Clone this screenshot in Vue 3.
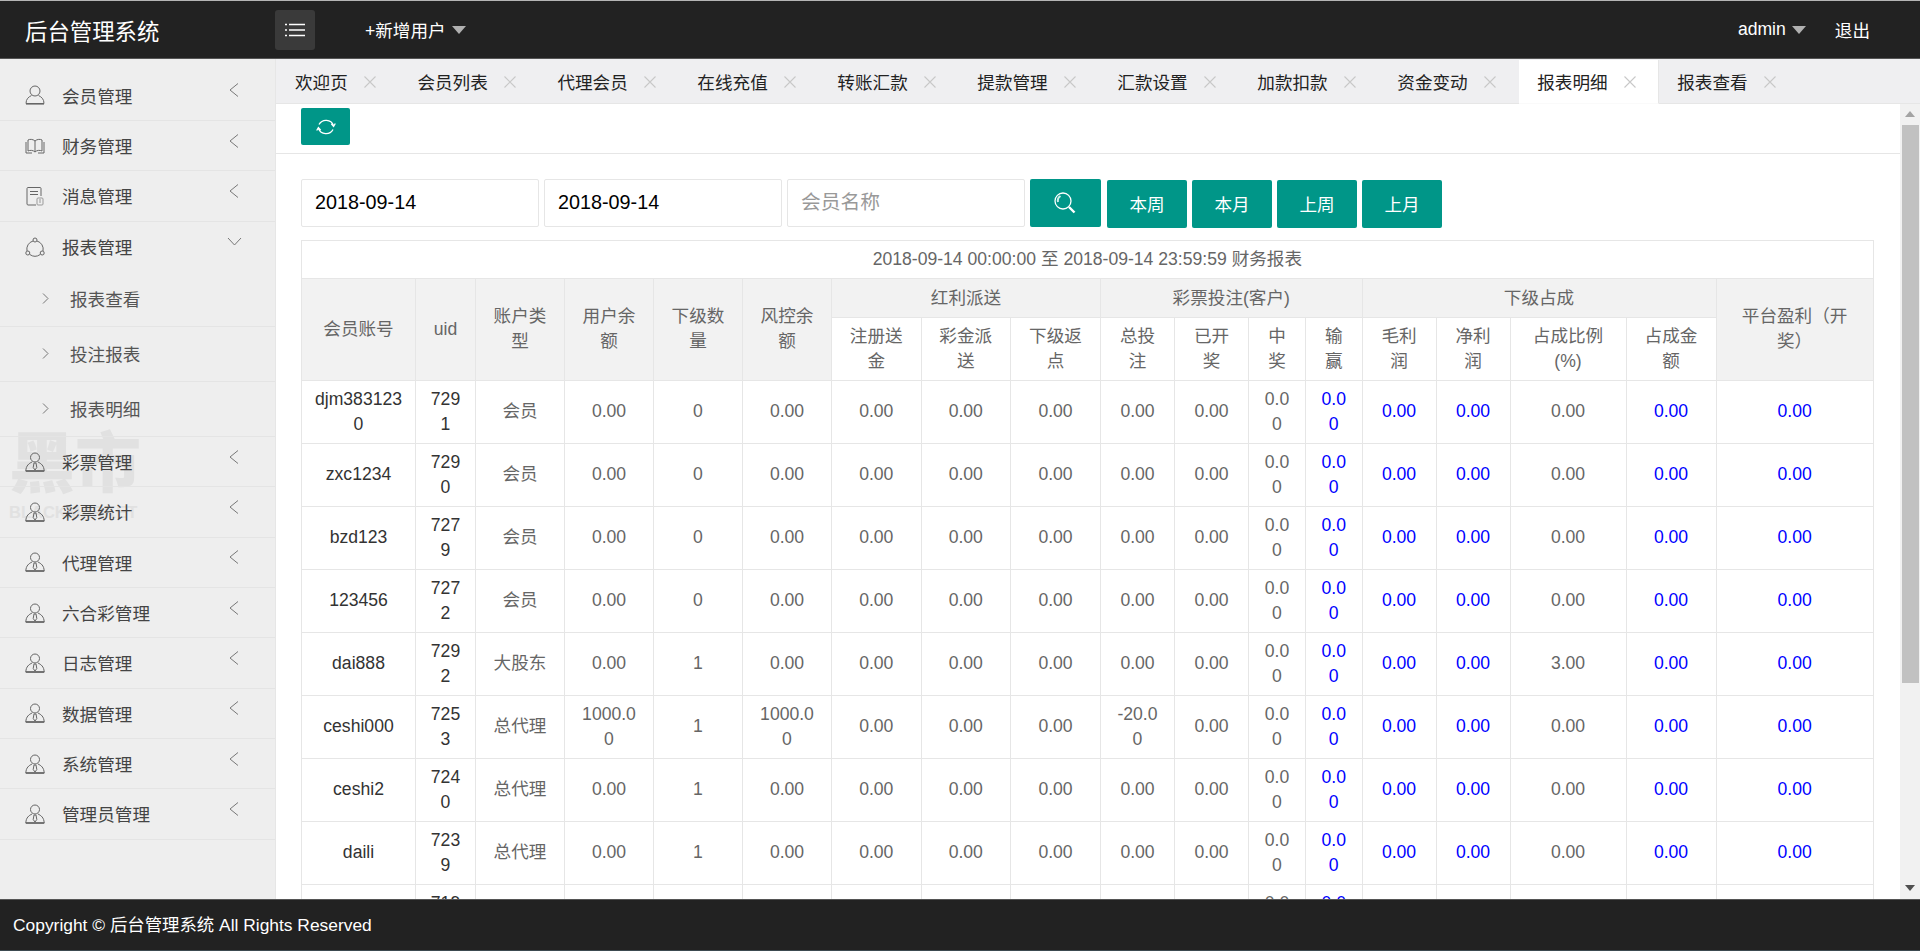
<template>
  <div class="page">
    <header class="topbar">
      <div class="logo">后台管理系统</div>
      <button class="menu-btn">
        <svg width="20" height="14" viewBox="0 0 20 14" fill="none" stroke="#fff" stroke-width="1.4">
          <path d="M0 1.5H2M4 1.5H20M0 7H2M4 7H20M0 12.5H2M4 12.5H20" />
        </svg>
      </button>
      <div class="add-user">+新增用户<span class="caret"></span></div>
      <div class="top-right">
        <span class="admin">admin<span class="caret"></span></span>
        <span class="logout">退出</span>
      </div>
    </header>

    <div class="body">
      <aside class="sidebar">
        <div class="watermark">
          <div class="wm-big">黑市</div>
          <div class="wm-small">BLACKMARKET</div>
        </div>
        <div v-for="menu in menus" :key="menu.name" class="menu-group">
          <div class="menu-item" :class="{ open: menu.children }">
            <svg class="menu-icon" width="20" height="20" viewBox="0 0 20 20" fill="none" stroke="#666" stroke-width="1">
              <template v-if="menu.icon === 'user'">
                <circle cx="10" cy="6" r="5" />
                <path d="M6.5 10.5C3.5 12 1 14 1 18.5H19C19 14 16.5 12 13.5 10.5" />
                <path d="M1 18.8H19" stroke-width="1.6" />
              </template>
              <template v-else-if="menu.icon === 'book'">
                <path d="M10 5C8 3 4.5 3 3 4V15C5 14 8 14 10 16C12 14 15 14 17 15V4C15.5 3 12 3 10 5ZM10 5V16" />
                <path d="M1 6V17H7M19 6V17H13" />
              </template>
              <template v-else-if="menu.icon === 'doc'">
                <path d="M16 10V2.5C16 1.8 15.500 1.500 15 1.500H3C2.500 1.500 2 1.800 2 2.500V18C2 18.600 2.500 19 3 19H11" />
                <path d="M5 5.500H13M5 8.500H13" />
                <rect x="12" y="12" width="6" height="7" rx="1" stroke="#999" />
                <path d="M14 14H16M14 16H16" stroke="#999" />
              </template>
              <template v-else-if="menu.icon === 'share'">
                <circle cx="10" cy="3" r="2" />
                <circle cx="2.800" cy="16" r="2" />
                <circle cx="17.200" cy="16" r="2" />
                <path d="M8 4A8.500 8.500 0 0 0 2 14M12 4A8.500 8.500 0 0 1 18 14M4.800 17.500A9 9 0 0 0 15.200 17.500" />
              </template>
              <template v-else>
                <circle cx="10" cy="5.500" r="4.500" />
                <path d="M7 10C4 11.500 1 13.500 0.800 19H19.200C19 13.500 16 11.500 13 10" />
                <path d="M0.800 19H19.200" stroke-width="1.600" />
                <path d="M9 11H11L11.800 15.500L10 18L8.200 15.500Z" />
              </template>
            </svg>
            <span class="menu-text">{{ menu.name }}</span>
            <svg v-if="menu.children" class="chevron down" width="15" height="9" viewBox="0 0 15 9" fill="none" stroke="#777">
              <polyline points="1,1 7.500,8 14,1" />
            </svg>
            <svg v-else class="chevron" width="10" height="14" viewBox="0 0 10 14" fill="none" stroke="#777">
              <polyline points="9,0.500 1,7 9,13.500" />
            </svg>
          </div>
          <div v-for="child in menu.children" :key="child" class="sub-item">
            <svg width="7" height="11" viewBox="0 0 7 11" fill="none" stroke="#777">
              <polyline points="1,0.500 6,5.500 1,10.500" />
            </svg>
            <span class="sub-text">{{ child }}</span>
          </div>
        </div>
      </aside>

      <main class="main">
        <nav class="tabs">
          <div v-for="tab in tabs" :key="tab" class="tab" :class="{ active: tab === '报表明细' }">
            <span>{{ tab }}</span>
            <svg class="tab-close" width="12" height="12" viewBox="0 0 12 12" stroke="#c8c8c8" stroke-width="1.100">
              <path d="M0.500 0.500L11.500 11.500M11.500 0.500L0.500 11.500" />
            </svg>
          </div>
        </nav>

        <div class="pane">
          <div class="content">
            <div class="toolbar">
              <button class="btn refresh">
                <svg width="20" height="20" viewBox="0 0 20 20" fill="none" stroke="#fff" stroke-width="1.300">
                  <path d="M3 7.500A8 8 0 0 1 17.500 8.500M15.300 6.800L17.600 9.300L19.300 6.500" />
                  <path d="M17 12.500A8 8 0 0 1 2.500 11.500M4.700 13.200L2.400 10.700L0.700 13.500" />
                </svg>
              </button>
            </div>

            <div class="report">
              <form class="filters" @submit.prevent>
                <input class="field" value="2018-09-14" readonly />
                <input class="field" value="2018-09-14" readonly />
                <input class="field" placeholder="会员名称" />
                <button class="btn search">
                  <svg width="22" height="22" viewBox="0 0 22 22" fill="none" stroke="#fff" stroke-width="1.300">
                    <circle cx="9" cy="9" r="8" />
                    <path d="M4 10A5.500 5.500 0 0 1 6.500 4" stroke="#cfeeea" stroke-width="2" />
                    <path d="M15 15L20.500 20.500" stroke-width="2.400" />
                  </svg>
                </button>
                <button v-for="b in ranges" :key="b" class="btn range">{{ b }}</button>
              </form>

              <table class="grid">
                <colgroup>
                  <col v-for="(w, i) in colWidths" :key="i" :style="{ width: w + 'px' }" />
                </colgroup>
                <thead>
                  <tr class="title-row">
                    <td colspan="18">2018-09-14 00:00:00 至 2018-09-14 23:59:59 财务报表</td>
                  </tr>
                  <tr class="head-row">
                    <th rowspan="2">会员账号</th>
                    <th rowspan="2">uid</th>
                    <th rowspan="2">账户类型</th>
                    <th rowspan="2">用户余额</th>
                    <th rowspan="2">下级数量</th>
                    <th rowspan="2">风控余额</th>
                    <th colspan="3">红利派送</th>
                    <th colspan="4">彩票投注(客户)</th>
                    <th colspan="4">下级占成</th>
                    <th rowspan="2">平台盈利（开奖）</th>
                  </tr>
                  <tr class="sub-head">
                    <th v-for="h in subHeads" :key="h">{{ h }}</th>
                  </tr>
                </thead>
                <tbody>
                  <tr v-for="row in rows" :key="row.uid">
                    <td class="dark name">{{ row.name }}</td>
                    <td class="dark">{{ row.uid }}</td>
                    <td>{{ row.type }}</td>
                    <td
                      v-for="(v, i) in row.cells"
                      :key="i"
                      :class="{ blue: blueCols.includes(i) }"
                    >{{ v }}</td>
                  </tr>
                </tbody>
              </table>
            </div>
          </div>

          <div class="scrollbar">
            <span class="arrow up"></span>
            <div class="track"><div class="thumb"></div></div>
            <span class="arrow dn"></span>
          </div>
        </div>
      </main>
    </div>

    <footer class="footer">Copyright © 后台管理系统 All Rights Reserved</footer>
  </div>
</template>

<script setup>
const menus = [
  { name: '会员管理', icon: 'user' },
  { name: '财务管理', icon: 'book' },
  { name: '消息管理', icon: 'doc' },
  { name: '报表管理', icon: 'share', children: ['报表查看', '投注报表', '报表明细'] },
  { name: '彩票管理', icon: 'tie' },
  { name: '彩票统计', icon: 'tie' },
  { name: '代理管理', icon: 'tie' },
  { name: '六合彩管理', icon: 'tie' },
  { name: '日志管理', icon: 'tie' },
  { name: '数据管理', icon: 'tie' },
  { name: '系统管理', icon: 'tie' },
  { name: '管理员管理', icon: 'tie' }
]

const tabs = ['欢迎页', '会员列表', '代理会员', '在线充值', '转账汇款', '提款管理', '汇款设置', '加款扣款', '资金变动', '报表明细', '报表查看']
const ranges = ['本周', '本月', '上周', '上月']
const subHeads = ['注册送金', '彩金派送', '下级返点', '总投注', '已开奖', '中奖', '输赢', '毛利润', '净利润', '占成比例(%)', '占成金额']
const colWidths = [114, 60, 89, 89, 89, 89, 89.5, 89.5, 90, 74, 74, 57, 56.5, 74, 74, 116, 90, 157]

// 蓝色列: 输赢 毛利润 净利润 占成金额 平台盈利
const blueCols = [9, 10, 11, 13, 14]

function makeRow(name, uid, type, opts = {}) {
  const z = '0.00'
  return {
    name,
    uid,
    type,
    cells: [
      opts.balance || z, opts.subs || '0', opts.balance || z,
      z, z, z,
      opts.bet || z, z, z, z,
      z, z, opts.rate || z, z, z
    ]
  }
}

const rows = [
  makeRow('djm3831230', '7291', '会员'),
  makeRow('zxc1234', '7290', '会员'),
  makeRow('bzd123', '7279', '会员'),
  makeRow('123456', '7272', '会员'),
  makeRow('dai888', '7292', '大股东', { subs: '1', rate: '3.00' }),
  makeRow('ceshi000', '7253', '总代理', { subs: '1', balance: '1000.00', bet: '-20.00' }),
  makeRow('ceshi2', '7240', '总代理', { subs: '1' }),
  makeRow('daili', '7239', '总代理', { subs: '1' }),
  makeRow('daili2', '7190', '总代理', { subs: '1' })
]
</script>

<style>
html,
body {
  margin: 0;
  height: 100%;
  overflow: hidden;
}
</style>

<style scoped>
.page {
  display: flex;
  flex-direction: column;
  height: 100vh;
  font-family: "Liberation Sans", "Noto Sans CJK SC", sans-serif;
  font-size: 17.6px;
  color: #333;
}

.topbar {
  display: flex;
  align-items: center;
  flex: none;
  height: 57px;
  background: #222;
  color: #fff;
  border-top: 1px solid #b5b5b5;
  border-bottom: 1px solid #555;
}

.logo {
  width: 275px;
  padding-left: 25px;
  box-sizing: border-box;
  font-size: 22.4px;
}

.menu-btn {
  display: flex;
  align-items: center;
  justify-content: center;
  width: 40px;
  height: 40px;
  padding: 0;
  border: 0;
  border-radius: 3px;
  background: #3a3a3a;
}

.add-user {
  display: flex;
  align-items: center;
  margin-left: 50px;
}

.caret {
  display: inline-block;
  margin-left: 6px;
  border-style: solid;
  border-width: 8px 7.5px 0;
  border-color: #b0b0b0 transparent transparent;
}

.top-right {
  display: flex;
  align-items: center;
  margin-left: auto;
  padding-right: 50px;
}

.admin {
  display: flex;
  align-items: center;
  margin-right: 29px;
}

.body {
  display: flex;
  flex: 1;
  min-height: 0;
}

.sidebar {
  position: relative;
  flex: none;
  width: 276px;
  box-sizing: border-box;
  padding-top: 11.5px;
  background: #eee;
  border-right: 1px solid #e6e6e6;
}

.watermark {
  position: absolute;
  left: 9px;
  top: 368px;
  color: #e1e1e1;
  font-weight: 900;
}

.wm-big {
  font-size: 66px;
  line-height: 74px;
}

.wm-small {
  margin-top: 1px;
  font-size: 16.5px;
  line-height: 20px;
  color: #e1e1e1;
}

.menu-group {
  position: relative;
}

.menu-item {
  display: flex;
  align-items: center;
  height: 50.35px;
  box-sizing: border-box;
  padding: 0 36px 0 25px;
  border-bottom: 1px solid #e4e4e4;
  color: #444;
}

.menu-item.open {
  border-bottom: 0;
}

.menu-icon {
  flex: none;
  margin-right: 17px;
}

.chevron {
  flex: none;
  margin-left: auto;
  margin-bottom: 10px;
}

.chevron.down {
  margin-right: -3px;
}

.sub-item {
  display: flex;
  align-items: center;
  height: 55px;
  box-sizing: border-box;
  padding-left: 42px;
  border-bottom: 1px solid #e4e4e4;
  color: #555;
}

.sub-text {
  margin-left: 21px;
}

.main {
  display: flex;
  flex-direction: column;
  flex: 1;
  min-width: 0;
}

.tabs {
  display: flex;
  flex: none;
  height: 45px;
  box-sizing: border-box;
  padding: 1px 0 0 1px;
  background: #efeff1;
  border-bottom: 1px solid #e6e6e6;
  color: #222;
}

.tab {
  display: flex;
  align-items: center;
  margin-right: 1px;
  padding: 0 22.6px 0 18px;
}

.tab.active {
  background: #fff;
  margin-bottom: -1px;
  border-bottom: 1px solid #fafafa;
  border-right: 1px solid #e6e6e6;
  margin-right: 0;
}

.tab-close {
  margin-left: 16px;
}

.pane {
  display: flex;
  flex: 1;
  min-height: 0;
}

.content {
  flex: 1;
  min-width: 0;
  overflow: hidden;
  background: #fff;
}

.toolbar {
  height: 50px;
  box-sizing: border-box;
  padding: 4px 0 0 25px;
  border-bottom: 1px solid #e6e6e6;
}

.btn {
  border: 0;
  padding: 0;
  border-radius: 2px;
  background: #009688;
  color: #fff;
  font: inherit;
}

.refresh {
  display: flex;
  align-items: center;
  justify-content: center;
  width: 49px;
  height: 37px;
}

.report {
  padding: 25px 0 0 25px;
}

.filters {
  display: flex;
  align-items: flex-start;
  gap: 5px;
  margin: 0 0 12px;
}

.field {
  width: 238px;
  height: 48px;
  box-sizing: border-box;
  padding: 0 13px 2px;
  border: 1px solid #e6e6e6;
  border-radius: 2px;
  outline: 0;
  background: #fff;
  color: #000;
  font: inherit;
  font-size: 19.8px;
}

.field::placeholder {
  color: #999;
}

.search {
  display: flex;
  align-items: center;
  justify-content: center;
  width: 71px;
  height: 48px;
  margin-right: 1px;
  padding-right: 2px;
}

.range {
  width: 80px;
  height: 48px;
  margin-top: 1px;
  padding-bottom: 2px;
}

.grid {
  width: 1572px;
  table-layout: fixed;
  border-collapse: collapse;
  color: #666;
}

.grid td,
.grid th {
  padding: 6px 13px;
  border: 1px solid #e6e6e6;
  line-height: 25px;
  font-weight: 400;
  text-align: center;
}

.grid td {
  word-break: break-all;
}

.grid .name {
  padding-left: 12px;
  padding-right: 12px;
}

.title-row td {
  height: 25px;
  padding: 6px 13px;
}

.head-row th {
  padding-top: 6.5px;
  padding-bottom: 6.5px;
  background: #f2f2f2;
}

.sub-head th {
  padding-bottom: 5.5px;
  background: #fff;
}

.grid .dark {
  color: #333;
}

.grid .blue {
  color: #00f;
}

.scrollbar {
  display: flex;
  flex-direction: column;
  align-items: center;
  flex: none;
  width: 20px;
  background: #f1f1f1;
}

.arrow {
  flex: none;
  width: 0;
  height: 0;
  margin: 7px 0;
  border-style: solid;
}

.arrow.up {
  border-width: 0 5px 6px;
  border-color: transparent transparent #a3a3a3;
}

.arrow.dn {
  margin-top: 5px;
  margin-bottom: 8px;
  border-width: 6px 5px 0;
  border-color: #505050 transparent transparent;
}

.track {
  flex: 1;
  width: 17px;
}

.thumb {
  height: 558px;
  margin-top: 1px;
  background: #c1c1c1;
}

.footer {
  flex: none;
  height: 50px;
  line-height: 50px;
  padding-left: 13px;
  background: #222;
  border-top: 1px solid #555;
  border-bottom: 1px solid #3c4a50;
  color: #fff;
  font-size: 17.4px;
}
</style>
